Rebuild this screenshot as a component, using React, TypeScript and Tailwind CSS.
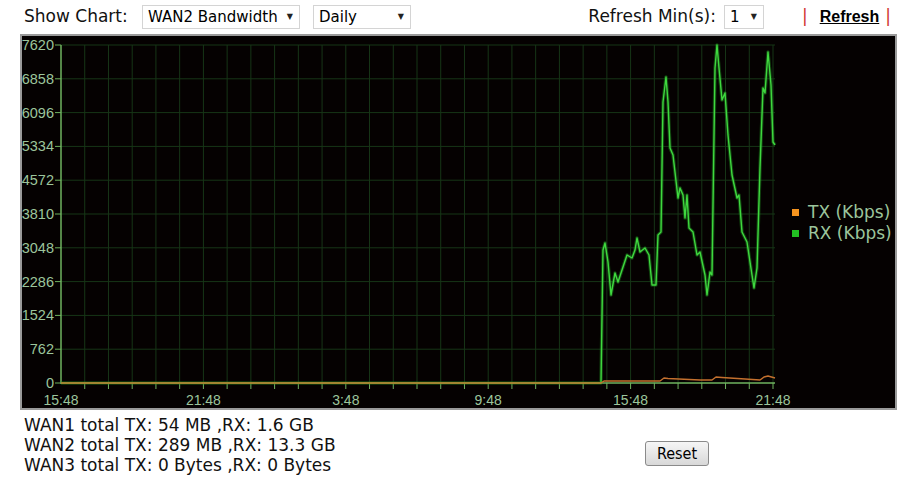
import React from "react";

const FONT = { fontFamily: '"DejaVu Sans", Verdana, sans-serif' };
const AXIS_FONT = '"Liberation Sans", Arial, sans-serif';

// chart geometry in page coordinates (svg viewBox matches the page)
const X0 = 61;
const X1 = 775;
const Y0 = 383;
const YTOP = 45;
const STEP_Y = (Y0 - YTOP) / 10;
const STEP_X = (773 - X0) / 30;

const yLabels = ["0", "762", "1524", "2286", "3048", "3810", "4572", "5334", "6096", "6858", "7620"];
const xLabels = ["15:48", "21:48", "3:48", "9:48", "15:48", "21:48"];

const rx: [number, number][] = [
  [61, 383], [601, 383], [603, 250], [605, 243], [608, 262], [611, 295], [615, 273], [618, 282],
  [622, 270], [627, 255], [632, 258], [635, 250], [637, 238], [640, 252], [645, 248], [649, 255],
  [652, 285], [656, 285], [658, 235], [661, 232], [663, 102], [666, 77], [668, 102], [670, 148],
  [673, 155], [678, 198], [680, 188], [683, 195], [685, 218], [687, 195], [689, 228], [693, 232],
  [697, 255], [700, 252], [705, 275], [707, 295], [710, 272], [712, 275], [715, 68], [717, 45],
  [719, 68], [722, 100], [725, 93], [728, 135], [732, 175], [737, 198], [739, 195], [742, 232],
  [747, 242], [752, 275], [754, 288], [757, 268], [760, 168], [763, 88], [765, 93], [768, 52],
  [771, 85], [773, 142], [775, 145],
];

const tx: [number, number][] = [
  [61, 383], [601, 383], [604, 381], [660, 381], [664, 378], [668, 378.5], [700, 380],
  [712, 380], [716, 377], [722, 377.5], [745, 379], [760, 380], [764, 377], [768, 376], [775, 378],
];

const toPath = (pts: [number, number][]) =>
  pts.map((p, i) => `${i === 0 ? "M" : "L"}${p[0]},${p[1]}`).join(" ");

function FakeSelect({ label, width }: { label: string; width: string }) {
  return (
    <div
      className={`flex h-[24px] items-center justify-between border border-[#d4d4d4] bg-white pl-[5px] pr-[6px] text-[15px] text-black ${width}`}
    >
      <span>{label}</span>
      <span className="text-[8px] text-[#222]">▼</span>
    </div>
  );
}

function BandwidthChart() {
  return (
    <div className="ml-[20px] h-[376px] w-[877px] border-2 border-[#9a9a9a] bg-[#050101]">
      <svg width={873} height={372} viewBox="22 36 873 372" className="block">
        {/* horizontal grid */}
        {yLabels.map((_, i) =>
          i === 0 ? null : (
            <line key={"h" + i} x1={X0} x2={X1} y1={Y0 - i * STEP_Y} y2={Y0 - i * STEP_Y} stroke="#173617" strokeWidth={1} />
          )
        )}
        {/* vertical grid */}
        {Array.from({ length: 30 }).map((_, j) => (
          <line key={"v" + j} x1={X0 + (j + 1) * STEP_X} x2={X0 + (j + 1) * STEP_X} y1={YTOP} y2={Y0} stroke="#173617" strokeWidth={1} />
        ))}
        {/* axes */}
        <line x1={X0} x2={X0} y1={YTOP} y2={Y0 + 1} stroke="#6fb35f" strokeWidth={1.5} />
        <line x1={X0} x2={X1} y1={Y0} y2={Y0} stroke="#6fb35f" strokeWidth={1.5} />
        {yLabels.map((l, i) => (
          <g key={"yl" + i}>
            <line x1={55} x2={X0} y1={Y0 - i * STEP_Y} y2={Y0 - i * STEP_Y} stroke="#6fb35f" strokeWidth={1} />
            <text
              x={54}
              y={Y0 - i * STEP_Y + 5}
              textAnchor="end"
              fill="#9cc59c"
              fontSize={14.5}
              fontFamily={AXIS_FONT}
            >
              {l}
            </text>
          </g>
        ))}
        {Array.from({ length: 30 }).map((_, j) => (
          <line key={"xt" + j} x1={X0 + (j + 1) * STEP_X} x2={X0 + (j + 1) * STEP_X} y1={Y0} y2={Y0 + 6} stroke="#6fb35f" strokeWidth={1} />
        ))}
        {xLabels.map((l, i) => (
          <text
            key={"xl" + i}
            x={X0 + i * 6 * STEP_X}
            y={405}
            textAnchor="middle"
            fill="#9cc59c"
            fontSize={14}
            fontFamily={AXIS_FONT}
          >
            {l}
          </text>
        ))}
        {/* data */}
        <path d={toPath(rx)} fill="none" stroke="#1f8f1f" strokeWidth={3.5} strokeOpacity={0.45} strokeLinejoin="round" />
        <path d={toPath(rx)} fill="none" stroke="#3fd83f" strokeWidth={1.4} strokeLinejoin="round" />
        <path d={toPath(tx)} fill="none" stroke="#c4702e" strokeWidth={1.5} strokeLinejoin="round" />
        {/* legend */}
        <rect x={792} y={209} width={7} height={7} fill="#f5931e" />
        <text x={808} y={218} fill="#9cc59c" fontSize={17} style={FONT}>
          TX (Kbps)
        </text>
        <rect x={792} y={230} width={7} height={7} fill="#22c022" />
        <text x={808} y={239} fill="#9cc59c" fontSize={17} style={FONT}>
          RX (Kbps)
        </text>
      </svg>
    </div>
  );
}

export default function App() {
  return (
    <div className="h-[477px] w-[899px] bg-white text-[17px] text-[#111]" style={FONT}>
      {/* 상단 컨트롤 */}
      <div className="flex h-[34px] items-center pl-[24px] pr-[8px]">
        <span className="w-[118px]">Show Chart:</span>
        <FakeSelect label="WAN2 Bandwidth" width="w-[158px]" />
        <div className="ml-[13px]">
          <FakeSelect label="Daily" width="w-[98px]" />
        </div>
        <div className="ml-auto flex items-center">
          <span>Refresh Min(s):</span>
          <div className="ml-[8px]">
            <FakeSelect label="1" width="w-[40px]" />
          </div>
          <span className="ml-[38px] text-[#d03030]">|</span>
          <a
            href="#"
            className="ml-[12px] text-[16px] font-bold text-black underline"
            style={{ fontFamily: '"Liberation Sans", Arial, sans-serif' }}
          >
            Refresh
          </a>
          <span className="ml-[6px] text-[#d03030]">|</span>
        </div>
      </div>

      <BandwidthChart />

      <div className="flex">
        <div className="w-[645px] pl-[24px] pt-[5px] leading-[20px]">
          <div>WAN1 total TX: 54 MB ,RX: 1.6 GB</div>
          <div>WAN2 total TX: 289 MB ,RX: 13.3 GB</div>
          <div>WAN3 total TX: 0 Bytes ,RX: 0 Bytes</div>
        </div>
        <button
          className="mt-[31px] h-[25px] w-[64px] rounded-[3px] border border-[#8a8a8a] bg-gradient-to-b from-[#f6f6f6] to-[#d8d8d8] text-[16px] text-black"
          style={{ fontFamily: '"DejaVu Sans Condensed", Tahoma, sans-serif' }}
        >
          Reset
        </button>
      </div>
    </div>
  );
}
